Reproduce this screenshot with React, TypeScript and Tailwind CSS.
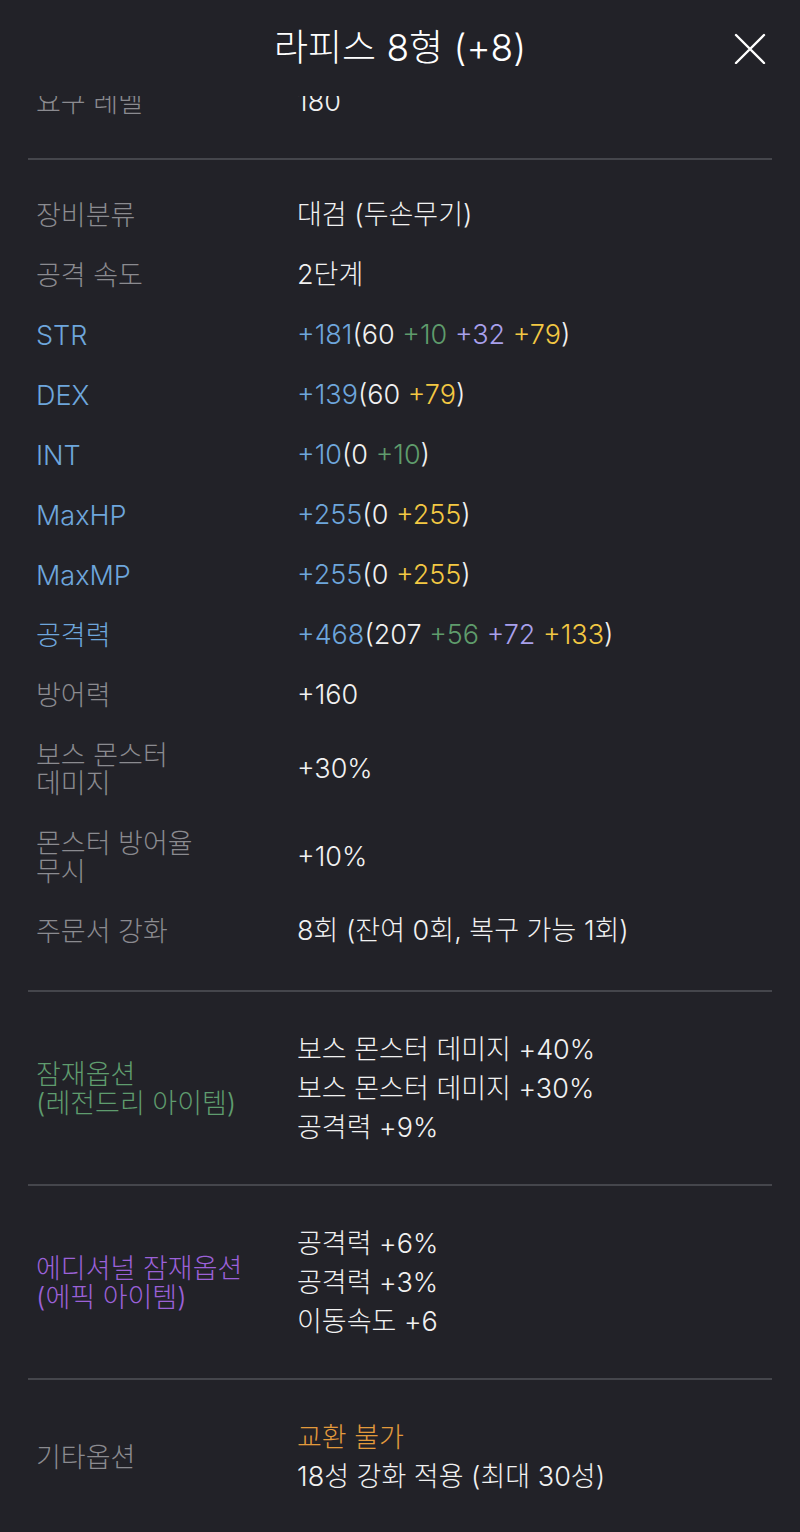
import { ReactNode } from "react";

const FONT = "font-['Inter','Noto_Sans_CJK_KR',sans-serif]";

const c = {
  blue: "text-[#6ea6dc]",
  green: "text-[#5f9c6c]",
  purple: "text-[#a9a0ec]",
  yellow: "text-[#f3c843]",
};

function StatRow({
  label,
  labelClass = "text-[#8b8b90]",
  tall,
  children,
}: {
  label: ReactNode;
  labelClass?: string;
  tall?: boolean;
  children: ReactNode;
}) {
  return (
    <div className={`flex items-center pt-[3px] ${tall ? "h-[88px]" : "h-[60px]"}`}>
      <div className={`w-[269px] shrink-0 pl-2 leading-[28px] ${labelClass}`}>{label}</div>
      <div className="text-[#f1f1f1]">{children}</div>
    </div>
  );
}

function OptionBlock({
  label,
  labelClass,
  lines,
  valueClass = [],
}: {
  label: string[];
  labelClass: string;
  lines: string[];
  valueClass?: string[];
}) {
  return (
    <div className="flex items-center border-t-2 border-[#45464c] pt-[38px] pb-[37px]">
      <div className={`w-[269px] shrink-0 pl-2 leading-[29px] ${labelClass}`}>
        {label.map((l) => (
          <div key={l}>{l}</div>
        ))}
      </div>
      <div className="leading-[39px]">
        {lines.map((l, i) => (
          <div key={l} className={valueClass[i] || "text-[#f1f1f1]"}>
            {l}
          </div>
        ))}
      </div>
    </div>
  );
}

export default function App() {
  return (
    <div className={`h-[1532px] w-[800px] overflow-hidden bg-[#222228] ${FONT} text-[27px] font-light`}>
      {/* Header */}
      <div className="relative z-10 grid h-[96px] grid-cols-[1fr_auto_1fr] items-center bg-[#222228]">
        <div />
        <h1 className="text-[37px] text-white">라피스 8형 (+8)</h1>
        <div className="flex justify-end pr-[34px]">
          <svg width="32" height="32" viewBox="0 0 32 32" fill="none">
            <path d="M2 3L30 31M30 3L2 31" stroke="white" strokeWidth="2.4" strokeLinecap="round" />
          </svg>
        </div>
      </div>

      <div className="px-[28px]">
        {/* clipped top row */}
        <div className="-mt-[25px] pb-[27px]">
          <StatRow label="요구 레벨">180</StatRow>
        </div>

        <div className="border-t-2 border-[#45464c] pt-[24px] pb-[30px]">
          <StatRow label="장비분류">대검 (두손무기)</StatRow>
          <StatRow label="공격 속도">2단계</StatRow>
          <StatRow label="STR" labelClass={c.blue}>
            <span className={c.blue}>+181</span>(60 <span className={c.green}>+10</span>{" "}
            <span className={c.purple}>+32</span> <span className={c.yellow}>+79</span>)
          </StatRow>
          <StatRow label="DEX" labelClass={c.blue}>
            <span className={c.blue}>+139</span>(60 <span className={c.yellow}>+79</span>)
          </StatRow>
          <StatRow label="INT" labelClass={c.blue}>
            <span className={c.blue}>+10</span>(0 <span className={c.green}>+10</span>)
          </StatRow>
          <StatRow label="MaxHP" labelClass={c.blue}>
            <span className={c.blue}>+255</span>(0 <span className={c.yellow}>+255</span>)
          </StatRow>
          <StatRow label="MaxMP" labelClass={c.blue}>
            <span className={c.blue}>+255</span>(0 <span className={c.yellow}>+255</span>)
          </StatRow>
          <StatRow label="공격력" labelClass={c.blue}>
            <span className={c.blue}>+468</span>(207 <span className={c.green}>+56</span>{" "}
            <span className={c.purple}>+72</span> <span className={c.yellow}>+133</span>)
          </StatRow>
          <StatRow label="방어력">+160</StatRow>
          <StatRow
            tall
            label={
              <>
                <div>보스 몬스터</div>
                <div>데미지</div>
              </>
            }
          >
            +30%
          </StatRow>
          <StatRow
            tall
            label={
              <>
                <div>몬스터 방어율</div>
                <div>무시</div>
              </>
            }
          >
            +10%
          </StatRow>
          <StatRow label="주문서 강화">8회 (잔여 0회, 복구 가능 1회)</StatRow>
        </div>

        <OptionBlock
          label={["잠재옵션", "(레전드리 아이템)"]}
          labelClass="text-[#5f9c6e]"
          lines={["보스 몬스터 데미지 +40%", "보스 몬스터 데미지 +30%", "공격력 +9%"]}
        />
        <OptionBlock
          label={["에디셔널 잠재옵션", "(에픽 아이템)"]}
          labelClass="text-[#9b61d8]"
          lines={["공격력 +6%", "공격력 +3%", "이동속도 +6"]}
        />
        <OptionBlock
          label={["기타옵션"]}
          labelClass="text-[#8b8b90]"
          lines={["교환 불가", "18성 강화 적용 (최대 30성)"]}
          valueClass={["text-[#e29a3c]"]}
        />
      </div>
    </div>
  );
}
